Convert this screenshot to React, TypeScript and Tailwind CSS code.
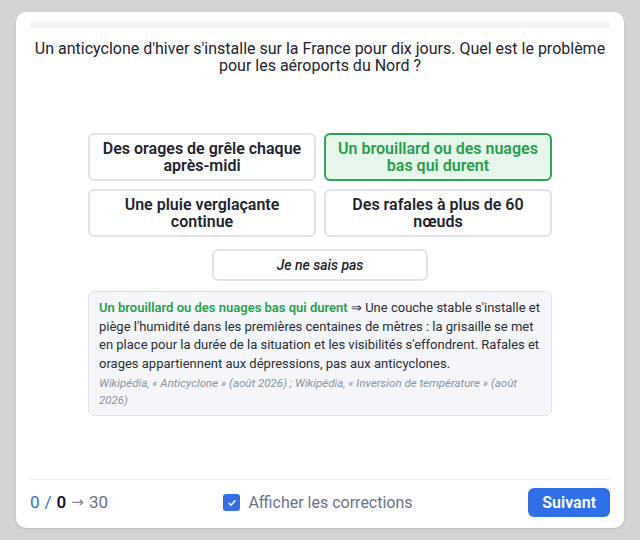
import { useState } from 'react'

const options = [
  'Des orages de grêle chaque après-midi',
  'Un brouillard ou des nuages bas qui durent',
  'Une pluie verglaçante continue',
  'Des rafales à plus de 60 nœuds',
]

export default function App() {
  const [picked] = useState(1)
  const [showCorrections, setShowCorrections] = useState(true)

  return (
    <div className="min-h-[540px] bg-[#d4d4d4] px-4 pt-3 pb-3 font-['Roboto',sans-serif]">
      <div className="flex h-[516px] flex-col rounded-[10px] bg-white px-3.5 pt-2.5 shadow-sm">
        <div className="h-1.5 rounded-full bg-[#f1f4f7]" />

        <p className="mt-[12px] text-center text-[16px] leading-[17px] text-[#1f2530]">
          Un anticyclone d'hiver s'installe sur la France pour dix jours. Quel est le problème
          pour les aéroports du Nord ?
        </p>

        <div className="mx-auto mt-[59px] w-[464px]">
          <div className="grid grid-cols-2 gap-2">
            {options.map((o, i) => (
              <button
                key={o}
                className={
                  i === picked
                    ? 'h-12 rounded-md border-2 border-[#2ea35a] bg-[#e6f6ea] px-3 text-[16px] font-semibold leading-[17px] text-[#2a9d50]'
                    : 'h-12 rounded-md border-2 border-[#dfe4ec] bg-white px-3 text-[16px] font-semibold leading-[17px] text-[#1f2530]'
                }
              >
                {o}
              </button>
            ))}
          </div>

          <div className="mt-3 flex justify-center">
            <button className="h-8 w-[216px] rounded-md border-2 border-[#dfe4ec] bg-white text-[14px] font-medium italic text-[#1f2530]">
              Je ne sais pas
            </button>
          </div>

          <div className="mt-[10px] rounded-md border border-[#e2e6ec] bg-[#f4f6f9] px-2.5 pt-[7px] pb-1.5">
            <p className="text-[13px] leading-[18.5px] text-[#2a2f38]">
              <span className="font-semibold text-[#2a9d50]">Un brouillard ou des nuages bas qui durent</span>{' '}
              ⇒ Une couche stable s'installe et piège l'humidité dans les premières centaines de mètres : la grisaille se
              met en place pour la durée de la situation et les visibilités s'effondrent. Rafales et orages appartiennent
              aux dépressions, pas aux anticyclones.
            </p>
            <p className="mt-0.5 text-[11.5px] leading-[17px] italic text-[#8a93a3]">
              Wikipédia, « Anticyclone » (août 2026) ; Wikipédia, « Inversion de température » (août 2026)
            </p>
          </div>
        </div>

        <div className="mt-auto mb-[11px] flex items-center justify-between border-t border-[#eef0f3] pt-2">
          <div className="flex w-[146px] items-center gap-[5px] text-[17px] text-[#6b7280]">
            <span className="text-[#2f6fe8]">0</span>
            <span className="text-[#2f6fe8]">/</span>
            <span className="font-semibold text-[#111827]">0</span>
            <span className="font-['DejaVu_Sans',sans-serif] text-[15px] text-[#7a8294]">→</span>
            <span>30</span>
          </div>
          <label className="flex cursor-pointer items-center gap-2 text-[16px] text-[#6b7588]">
            <span
              onClick={() => setShowCorrections(!showCorrections)}
              className="flex h-[17px] w-[17px] items-center justify-center rounded-[3px] bg-[#2f6fe8]"
            >
              {showCorrections && (
                <svg width="10" height="10" viewBox="0 0 10 10" fill="none">
                  <path d="M2 5.2 L4.1 7.3 L8 2.8" stroke="white" strokeWidth="1.5" strokeLinecap="round" strokeLinejoin="round" />
                </svg>
              )}
            </span>
            Afficher les corrections
          </label>
          <div className="flex w-[150px] justify-end">
            <button className="h-[29px] rounded-md bg-[#2f6fe8] px-[14px] text-[16px] font-semibold text-white">
              Suivant
            </button>
          </div>
        </div>
      </div>
    </div>
  )
}
